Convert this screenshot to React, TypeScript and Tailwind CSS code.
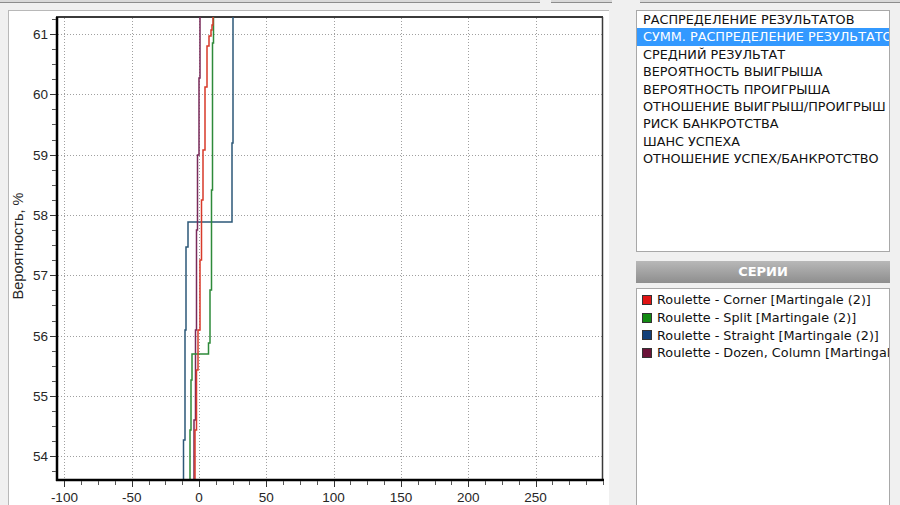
import React from "react";

const X = (v: number) => 199 + v * 1.346;
const Y = (p: number) => 34 + (61 - p) * 60.33;

const xMajors = [-100, -50, 0, 50, 100, 150, 200, 250];
const yMajors = [54, 55, 56, 57, 58, 59, 60, 61];

const xMinors: number[] = [];
for (let v = -100; v <= 300; v += 12.5) xMinors.push(v);
const yMinors: number[] = [];
for (let p = 53.75; p <= 61.25; p += 0.25) yMinors.push(p);

type Pt = [number, number];
const pts = (a: Pt[]) => a.map(([x, y]) => `${x},${y}`).join(" ");

const blue: Pt[] = [[233, 17], [233, 143], [232, 143], [232, 222], [188, 222], [188, 247], [186, 247], [186, 330], [185, 330], [185, 440], [183.5, 440], [183.5, 479]];
const purple: Pt[] = [[200, 17], [200, 78], [199, 78], [199, 155], [197.5, 155], [197.5, 230], [196.5, 230], [196.5, 330], [195.5, 330], [195.5, 420], [194, 420], [194, 479]];
const red: Pt[] = [[213, 17], [213, 25], [212, 25], [212, 30], [211, 30], [211, 36], [209, 36], [209, 46], [207, 46], [207, 87], [205, 87], [205, 150], [203, 150], [203, 200], [201.5, 200], [201.5, 260], [200, 260], [200, 330], [198, 330], [198, 370], [196.5, 370], [196.5, 430], [195, 430], [195, 479]];
const green: Pt[] = [[213.5, 17], [213.5, 43], [212.5, 43], [212.5, 190], [211.5, 190], [211.5, 290], [210, 290], [210, 343], [208.5, 343], [208.5, 354], [192, 354], [192, 380], [191, 380], [191, 430], [190, 430], [190, 479]];

const items = [
  "РАСПРЕДЕЛЕНИЕ РЕЗУЛЬТАТОВ",
  "СУММ. РАСПРЕДЕЛЕНИЕ РЕЗУЛЬТАТОВ",
  "СРЕДНИЙ РЕЗУЛЬТАТ",
  "ВЕРОЯТНОСТЬ ВЫИГРЫША",
  "ВЕРОЯТНОСТЬ ПРОИГРЫША",
  "ОТНОШЕНИЕ ВЫИГРЫШ/ПРОИГРЫШ",
  "РИСК БАНКРОТСТВА",
  "ШАНС УСПЕХА",
  "ОТНОШЕНИЕ УСПЕХ/БАНКРОТСТВО",
];

const series = [
  { c: "bg-[#e01414]", t: "Roulette - Corner [Martingale (2)]" },
  { c: "bg-[#128a12]", t: "Roulette - Split [Martingale (2)]" },
  { c: "bg-[#123f78]", t: "Roulette - Straight [Martingale (2)]" },
  { c: "bg-[#6a1238]", t: "Roulette - Dozen, Column [Martingale (2)]" },
];

function Chart() {
  return (
    <svg width={600} height={494} viewBox="9 11 600 494" className="block">
      {xMajors.map((v) => (
        <line key={"gx" + v} x1={Math.round(X(v)) + 0.5} x2={Math.round(X(v)) + 0.5} y1={18} y2={478} stroke="#a0a0a0" strokeWidth={1} strokeDasharray="1 2" />
      ))}
      {yMajors.map((p) => (
        <line key={"gy" + p} y1={Math.round(Y(p)) + 0.5} y2={Math.round(Y(p)) + 0.5} x1={58} x2={602} stroke="#a0a0a0" strokeWidth={1} strokeDasharray="1 2" />
      ))}
      <line x1={56} x2={603} y1={17} y2={17} stroke="#3a3a3a" strokeWidth={2} />
      <line x1={602.5} x2={602.5} y1={17} y2={480} stroke="#3a3a3a" strokeWidth={1.5} />
      <polyline points={pts(blue)} fill="none" stroke="#2c5878" strokeWidth={1.5} />
      <polyline points={pts(purple)} fill="none" stroke="#7a2a5a" strokeWidth={1.5} />
      <polyline points={pts(green)} fill="none" stroke="#2e8a3a" strokeWidth={1.5} />
      <polyline points={pts(red)} fill="none" stroke="#d83a2a" strokeWidth={1.5} />
      <line x1={57} x2={57} y1={17} y2={481} stroke="#000" strokeWidth={2.5} />
      <line x1={56} x2={604} y1={480} y2={480} stroke="#000" strokeWidth={2.5} />
      {yMinors.map((p) => (
        <line key={"ym" + p} x1={52} x2={56} y1={Math.round(Y(p)) + 0.5} y2={Math.round(Y(p)) + 0.5} stroke="#555" strokeWidth={1} />
      ))}
      {yMajors.map((p) => (
        <g key={"yl" + p}>
          <line x1={50} x2={56} y1={Math.round(Y(p)) + 0.5} y2={Math.round(Y(p)) + 0.5} stroke="#333" strokeWidth={1} />
          <text x={48} y={Y(p) + 5} textAnchor="end" fontSize={13.5} fill="#262626" fontFamily="'Liberation Sans', Arial, sans-serif">{p}</text>
        </g>
      ))}
      {xMinors.map((v) => (
        <line key={"xm" + v} y1={481} y2={485} x1={Math.round(X(v)) + 0.5} x2={Math.round(X(v)) + 0.5} stroke="#555" strokeWidth={1} />
      ))}
      {xMajors.map((v) => (
        <g key={"xl" + v}>
          <line y1={481} y2={487} x1={Math.round(X(v)) + 0.5} x2={Math.round(X(v)) + 0.5} stroke="#333" strokeWidth={1} />
          <text x={X(v)} y={502} textAnchor="middle" fontSize={13.5} fill="#262626" fontFamily="'Liberation Sans', Arial, sans-serif">{v}</text>
        </g>
      ))}
      <text x={0} y={0} transform="translate(23 246) rotate(-90)" textAnchor="middle" fontSize={14.5} fill="#262626" fontFamily="'Liberation Sans', Arial, sans-serif">Вероятность, %</text>
    </svg>
  );
}

export default function App() {
  return (
    <div className="w-[900px] h-[505px] bg-[#f0f0f0] overflow-hidden">
      <div className="flex h-[3px]">
        <div className="w-[540px] bg-[#d9d9d9] border-b border-[#8c8c8c]" />
        <div className="ml-[11px] w-[61px] bg-[#d9d9d9] border-b border-[#8c8c8c]" />
        <div className="ml-[28px] flex-1 bg-[#d9d9d9] border-b border-[#8c8c8c]" />
      </div>
      <div className="flex mt-[7px]">
        <div className="ml-[8px] w-[601px] h-[495px] bg-white border-l border-t border-[#b8b8b8]">
          <Chart />
        </div>
        <div className="ml-[27px] w-[254px] flex flex-col">
          <div className="h-[242px] bg-white border border-[#a8a8a8] overflow-hidden font-['DejaVu_Sans',sans-serif] text-[12.8px] text-[#111]">
            {items.map((t, i) => (
              <div
                key={t}
                className={
                  "h-[17.4px] leading-[17.4px] pl-[6px] whitespace-nowrap " +
                  (i === 1 ? "bg-[#3399ff] text-white" : "")
                }
              >
                {t}
              </div>
            ))}
          </div>
          <div className="mt-[9px] h-[22px] bg-gradient-to-b from-[#b8b8b8] to-[#8e8e8e] flex items-center justify-center text-white font-bold text-[13px] font-['DejaVu_Sans',sans-serif]">
            СЕРИИ
          </div>
          <div className="mt-[5px] h-[230px] bg-white border border-[#a8a8a8] overflow-hidden pt-[2px] font-['DejaVu_Sans',sans-serif] text-[12.8px] text-[#111]">
            {series.map((s) => (
              <div key={s.t} className="h-[17.7px] flex items-center pl-[5px] whitespace-nowrap">
                <div className={"shrink-0 w-[10px] h-[10px] border border-[#333] " + s.c} />
                <span className="ml-[5px]">{s.t}</span>
              </div>
            ))}
          </div>
        </div>
      </div>
    </div>
  );
}
